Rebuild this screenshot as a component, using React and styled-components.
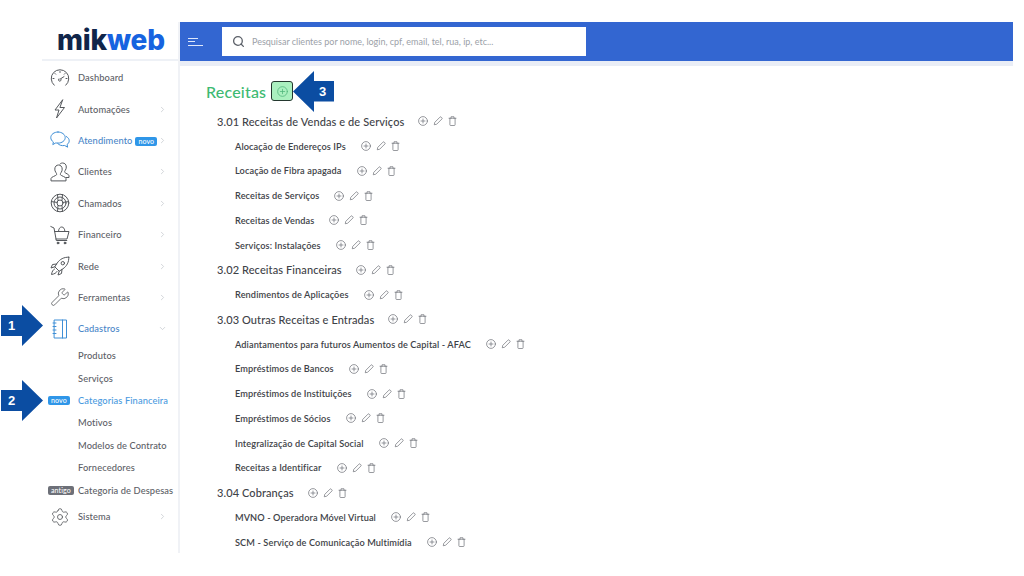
import React from 'react';
import styled, { createGlobalStyle } from 'styled-components';
import { ChevronRight, ChevronDown, Search, Wrench, Settings } from 'lucide-react';

const Global = createGlobalStyle`
  html, body { margin: 0; padding: 0; background: #fff; }
  body { font-family: "Lato", "Open Sans", sans-serif; }
`;

const Page = styled.div`
  position: relative;
  width: 1024px;
  height: 576px;
  overflow: hidden;
  box-sizing: border-box;
  padding: 22px 11px 23px 42px;
  display: flex;
`;

/* sidebar */
const Sidebar = styled.aside`
  width: 138px;
  flex: none;
  border-right: 2px solid #f0f2f6;
  box-sizing: border-box;
`;
const Logo = styled.div`
  height: 39px;
  box-sizing: border-box;
  border-bottom: 2px solid #eef1f6;
  display: flex;
  align-items: center;
  justify-content: center;
  font-family: "Inter", sans-serif;
  font-weight: 800;
  font-size: 28px;
  letter-spacing: -0.2px;
  color: #10254a;
  padding: 0 0 2px 2px;
  span { color: #1663e0; }
`;
const Menu = styled.nav`
  padding-top: 1px;
`;
const Item = styled.div`
  height: 31.4px;
  display: flex;
  align-items: center;
  color: ${(p) => (p.$active ? '#4a86c8' : '#5c6066')};
  font-size: 9.3px;
  font-weight: 500;
  letter-spacing: 0.1px;
  svg.main { color: ${(p) => (p.$active ? '#3f8fd6' : '#55585c')}; }
`;
const IconSlot = styled.div`
  width: 36px;
  flex: none;
  display: flex;
  justify-content: center;
`;
const Label = styled.span`
  flex: 1;
  white-space: nowrap;
`;
const Chevron = styled.div`
  width: 20px;
  flex: none;
  color: #c4c8ce;
  display: flex;
`;
const SubItem = styled.div`
  height: 22.4px;
  display: flex;
  align-items: center;
  color: ${(p) => (p.$active ? '#4a9ae0' : '#5c6066')};
  font-size: 9.3px;
  font-weight: 500;
  letter-spacing: 0.1px;
  white-space: nowrap;
`;
const BadgeSlot = styled.div`
  width: 36px;
  flex: none;
  padding-left: 6px;
  box-sizing: border-box;
  display: flex;
`;
const Badge = styled.span`
  background: ${(p) => p.$bg || '#2f96e8'};
  color: #fff;
  border-radius: 2px;
  font-size: 7px;
  font-weight: 500;
  line-height: 9px;
  height: 9px;
  padding: 0 3px;
  white-space: nowrap;
`;
const ItemBadge = styled(Badge)`
  display: inline-block;
  margin-left: 3px;
`;
const SubLabel = styled.span`
  white-space: nowrap;
`;

/* main */
const Main = styled.main`
  flex: 1;
  min-width: 0;
  display: flex;
  flex-direction: column;
`;
const TopBar = styled.header`
  height: 39px;
  flex: none;
  background: #3366d1;
  box-shadow: 0 5px 0 #e9edf6;
  display: flex;
  align-items: center;
  padding-left: 8px;
  gap: 19px;
`;
const Burger = styled.div`
  width: 15px;
  display: flex;
  flex-direction: column;
  gap: 2.5px;
  i { display: block; height: 1px; background: #dfe8fb; }
  i:nth-child(1) { width: 10px; }
  i:nth-child(2) { width: 7px; }
  i:nth-child(3) { width: 15px; }
`;
const SearchBox = styled.div`
  width: 364px;
  height: 29px;
  background: #fff;
  display: flex;
  align-items: center;
  padding-left: 10px;
  box-sizing: border-box;
  gap: 7px;
  color: #9ca1a8;
  font-size: 9px;
  svg { color: #5b6068; }
`;
const Content = styled.div`
  padding: 20px 0 0 26px;
  overflow: hidden;
  flex: 1;
`;
const TitleRow = styled.div`
  display: flex;
  align-items: center;
  gap: 5px;
  height: 20px;
  margin-bottom: 8px;
`;
const Title = styled.h1`
  margin: 0;
  font-size: 16px;
  font-weight: 500;
  color: #3dba72;
  letter-spacing: 0.2px;
`;
const AddButton = styled.div`
  width: 22px;
  height: 20px;
  box-sizing: border-box;
  background: #aaf0bf;
  border: 1.5px solid #24382f;
  border-radius: 3px;
  display: flex;
  align-items: center;
  justify-content: center;
  color: #4fb57c;
`;
const Row = styled.div`
  height: 24.75px;
  display: flex;
  align-items: center;
  padding-left: ${(p) => (p.$sub ? '29px' : '11px')};
  gap: ${(p) => (p.$sub ? '15px' : '14px')};
  color: #3e4247;
  font-size: ${(p) => (p.$sub ? '9.2px' : '11px')};
  font-weight: ${(p) => (p.$sub ? 600 : 500)};
  letter-spacing: 0.1px;
  white-space: nowrap;
`;
const Actions = styled.div`
  display: flex;
  align-items: center;
  gap: 5px;
  color: #6b6f75;
`;

/* callouts */
const Arrow = styled.div`
  position: absolute;
  left: ${(p) => p.$x}px;
  top: ${(p) => p.$y}px;
  width: ${(p) => p.$w}px;
  height: 41px;
  color: #fff;
  font-family: "Liberation Sans", sans-serif;
  font-weight: 700;
  font-size: 13px;
  display: flex;
  align-items: center;
  svg { position: absolute; inset: 0; }
  span { position: relative; margin-left: ${(p) => p.$tx}px; }
`;

const Plus = ({ size = 10 }) => (
  <svg width={size} height={size} viewBox="0 0 20 20" fill="none" stroke="currentColor" strokeWidth="1.4" strokeLinecap="round">
    <circle cx="10" cy="10" r="8.8" />
    <path d="M10 6v8M6 10h8" />
  </svg>
);
const Pencil = () => (
  <svg width="10" height="10" viewBox="0 0 20 20" fill="none" stroke="currentColor" strokeWidth="1.4" strokeLinejoin="round">
    <path d="M2.5 17.5l1-4.8L14 2.2a1.6 1.6 0 0 1 2.3 0l1.5 1.5a1.6 1.6 0 0 1 0 2.3L7.3 16.5z" />
  </svg>
);
const Trash = () => (
  <svg width="9" height="10" viewBox="0 0 18 20" fill="none" stroke="currentColor" strokeWidth="1.4" strokeLinecap="round" strokeLinejoin="round">
    <path d="M2 4.5h14M6 4.500V1.500h6v3M3.800 4.500v13a1.500 1.500 0 0 0 1.500 1.500h7.400a1.500 1.500 0 0 0 1.500-1.500v-13" />
  </svg>
);

const line = { className: 'main', fill: 'none', stroke: 'currentColor', strokeWidth: 1, strokeLinecap: 'round', strokeLinejoin: 'round' };
const GaugeIcon = () => (
  <svg width="20" height="20" viewBox="0 0 20 20" {...line}>
    <path d="M4.200 17.200A8.800 8.800 0 1 1 15.800 17.200" />
    <path d="M10 11.200l4-2.600M8.800 10.800a1.400 1.400 0 1 0 2.400 .8M3 10.500h1M16 10.500h1M10 3.500v1M5 5.500l.7.7M15 5.500l-.7.7" />
  </svg>
);
const BoltIcon = () => (
  <svg width="20" height="20" viewBox="0 0 20 20" {...line}>
    <path d="M12.500 1L5 11h4l-2.500 8 8-10.500h-4.200z" />
  </svg>
);
const BubblesIcon = () => (
  <svg width="20" height="20" viewBox="0 0 20 20" {...line}>
    <path d="M8 2C4 2 .8 4.500 .8 7.600c0 1.800 1 3.300 2.600 4.400L2.800 14.600l3-1.700c.7.2 1.400.2 2.200.2 4 0 7.200-2.400 7.200-5.500S12 2 8 2z" />
    <path d="M16.300 6.500c1.800 1 2.900 2.500 2.900 4.300 0 1.500-.8 2.800-2.100 3.700l.5 2.700-2.900-1.700c-3 .5-5.600-.3-7-2" />
  </svg>
);
const UsersIcon = () => (
  <svg width="20" height="20" viewBox="0 0 20 20" {...line}>
    <path d="M1 18.500v-2c0-1.500 4.700-2.600 5.500-3.700.4-.6 0-1.500-.6-2.300-.8-1-1.100-2.200-1.100-3.400C4.800 4.500 6.500 3 8.500 3s3.700 1.500 3.700 4.100c0 1.200-.3 2.400-1.100 3.400-.6.8-1 1.700-.6 2.300.8 1.100 5.500 2.200 5.500 3.700v2z" />
    <path d="M10 2c.7-.7 1.700-1 2.700-1 2 0 3.600 1.500 3.600 4 0 1.200-.3 2.300-1 3.300-.5.700-.9 1.500-.5 2.100.7 1 4.200 1.800 4.200 3.300v1.800h-3" />
  </svg>
);
const BuoyIcon = () => (
  <svg width="20" height="20" viewBox="0 0 20 20" {...line}>
    <circle cx="10" cy="10" r="8.800" />
    <circle cx="10" cy="10" r="6" />
    <circle cx="10" cy="10" r="3" />
    <path d="M7.500 1.600l.5 5.700M12.500 1.600l-.5 5.700M1.300 8.600l5.800.8M18.700 8.600l-5.800.8M7.500 18.400l.5-5.700M12.500 18.400l-.5-5.700" />
  </svg>
);
const CartIcon = () => (
  <svg width="20" height="20" viewBox="0 0 20 20" {...line}>
    <path d="M.8 1.500l3.200 1.500 2.300 12.500h10.500M4.500 6.500h14.500l-2 7.500H6" />
    <path d="M8.500 6.500c0-2.800 1.500-4.500 3.200-4.500s3.200 1.700 3.200 4.500" />
    <circle cx="8" cy="18" r=".9" fill="currentColor" />
    <circle cx="15" cy="18" r=".9" fill="currentColor" />
  </svg>
);
const RocketIcon = () => (
  <svg width="20" height="20" viewBox="0 0 20 20" {...line}>
    <path d="M18.800 1.200c-5-.2-9 2-11.700 6l-2.300 3.600 4.400 4.400 3.600-2.300c4-2.700 6.200-6.700 6-11.700z" />
    <circle cx="12.800" cy="7.200" r="1.700" />
    <path d="M6.700 8L2.500 8.500 1 12l3.800-1.200M12 13.300l-.5 4.200-3.500 1.500 1.200-3.800M4.500 13c-1.500.8-2.500 2.500-3 5.500 3-.5 4.700-1.500 5.500-3" />
  </svg>
);
const NotebookIcon = () => (
  <svg width="20" height="20" viewBox="0 0 20 20" {...line}>
    <rect x="4.500" y="1" width="12" height="18" />
    <path d="M12.500 1v18M3 4h3M3 7.500h3M3 11h3M3 14.500h3" />
  </svg>
);

const menu = [
  { label: 'Dashboard', icon: <GaugeIcon />, noArrow: true },
  { label: 'Automações', icon: <BoltIcon /> },
  { label: 'Atendimento', icon: <BubblesIcon />, active: true, badge: 'novo' },
  { label: 'Clientes', icon: <UsersIcon /> },
  { label: 'Chamados', icon: <BuoyIcon /> },
  { label: 'Financeiro', icon: <CartIcon /> },
  { label: 'Rede', icon: <RocketIcon /> },
  { label: 'Ferramentas', icon: <Wrench className="main" size={20} strokeWidth={1} /> },
];

const subItems = [
  { label: 'Produtos' },
  { label: 'Serviços' },
  { label: 'Categorias Financeira', badge: 'novo', active: true },
  { label: 'Motivos' },
  { label: 'Modelos de Contrato' },
  { label: 'Fornecedores' },
  { label: 'Categoria de Despesas', badge: 'antigo', bg: '#6d7078' },
];

const rows = [
  ['3.01 Receitas de Vendas e de Serviços', false],
  ['Alocação de Endereços IPs', true],
  ['Locação de Fibra apagada', true],
  ['Receitas de Serviços', true],
  ['Receitas de Vendas', true],
  ['Serviços: Instalações', true],
  ['3.02 Receitas Financeiras', false],
  ['Rendimentos de Aplicações', true],
  ['3.03 Outras Receitas e Entradas', false],
  ['Adiantamentos para futuros Aumentos de Capital - AFAC', true],
  ['Empréstimos de Bancos', true],
  ['Empréstimos de Instituições', true],
  ['Empréstimos de Sócios', true],
  ['Integralização de Capital Social', true],
  ['Receitas a Identificar', true],
  ['3.04 Cobranças', false],
  ['MVNO - Operadora Móvel Virtual', true],
  ['SCM - Serviço de Comunicação Multimídia', true],
];

const RightArrow = () => (
  <svg width="43" height="41" viewBox="0 0 43 41">
    <path d="M1 10h21V0l21 20.500L22 41V31H1z" fill="#0b4da2" />
  </svg>
);
const LeftArrow = () => (
  <svg width="42" height="41" viewBox="0 0 42 41">
    <path d="M41 10H21V0L0 20.500 21 41V30.500h20z" fill="#0b4da2" />
  </svg>
);

const App = () => {
  return (
    <Page>
      <Global />
      <Sidebar>
        <Logo>
          mik<span>web</span>
        </Logo>
        <Menu>
          {menu.map((m) => (
            <Item key={m.label} $active={m.active}>
              <IconSlot>{m.icon}</IconSlot>
              <Label>
                {m.label}
                {m.badge && <ItemBadge>{m.badge}</ItemBadge>}
              </Label>
              <Chevron>{!m.noArrow && <ChevronRight size={9} />}</Chevron>
            </Item>
          ))}
          <Item $active>
            <IconSlot>
              <NotebookIcon />
            </IconSlot>
            <Label>Cadastros</Label>
            <Chevron>
              <ChevronDown size={9} />
            </Chevron>
          </Item>
          {subItems.map((s) => (
            <SubItem key={s.label} $active={s.active}>
              <BadgeSlot>{s.badge && <Badge $bg={s.bg}>{s.badge}</Badge>}</BadgeSlot>
              <SubLabel>{s.label}</SubLabel>
            </SubItem>
          ))}
          <Item>
            <IconSlot>
              <Settings className="main" size={20} strokeWidth={1} />
            </IconSlot>
            <Label>Sistema</Label>
            <Chevron>
              <ChevronRight size={9} />
            </Chevron>
          </Item>
        </Menu>
      </Sidebar>
      <Main>
        <TopBar>
          <Burger>
            <i />
            <i />
            <i />
          </Burger>
          <SearchBox>
            <Search size={13} strokeWidth={2.4} />
            Pesquisar clientes por nome, login, cpf, email, tel, rua, ip, etc...
          </SearchBox>
        </TopBar>
        <Content>
          <TitleRow>
            <Title>Receitas</Title>
            <AddButton>
              <Plus size={11} />
            </AddButton>
          </TitleRow>
          {rows.map(([text, sub]) => (
            <Row key={text} $sub={sub}>
              {text}
              <Actions>
                <Plus />
                <Pencil />
                <Trash />
              </Actions>
            </Row>
          ))}
        </Content>
      </Main>
      <Arrow $x={0} $y={305} $w={43} $tx={8}>
        <RightArrow />
        <span>1</span>
      </Arrow>
      <Arrow $x={0} $y={380} $w={43} $tx={8}>
        <RightArrow />
        <span>2</span>
      </Arrow>
      <Arrow $x={293} $y={71} $w={42} $tx={26}>
        <LeftArrow />
        <span>3</span>
      </Arrow>
    </Page>
  );
};

export default App;
